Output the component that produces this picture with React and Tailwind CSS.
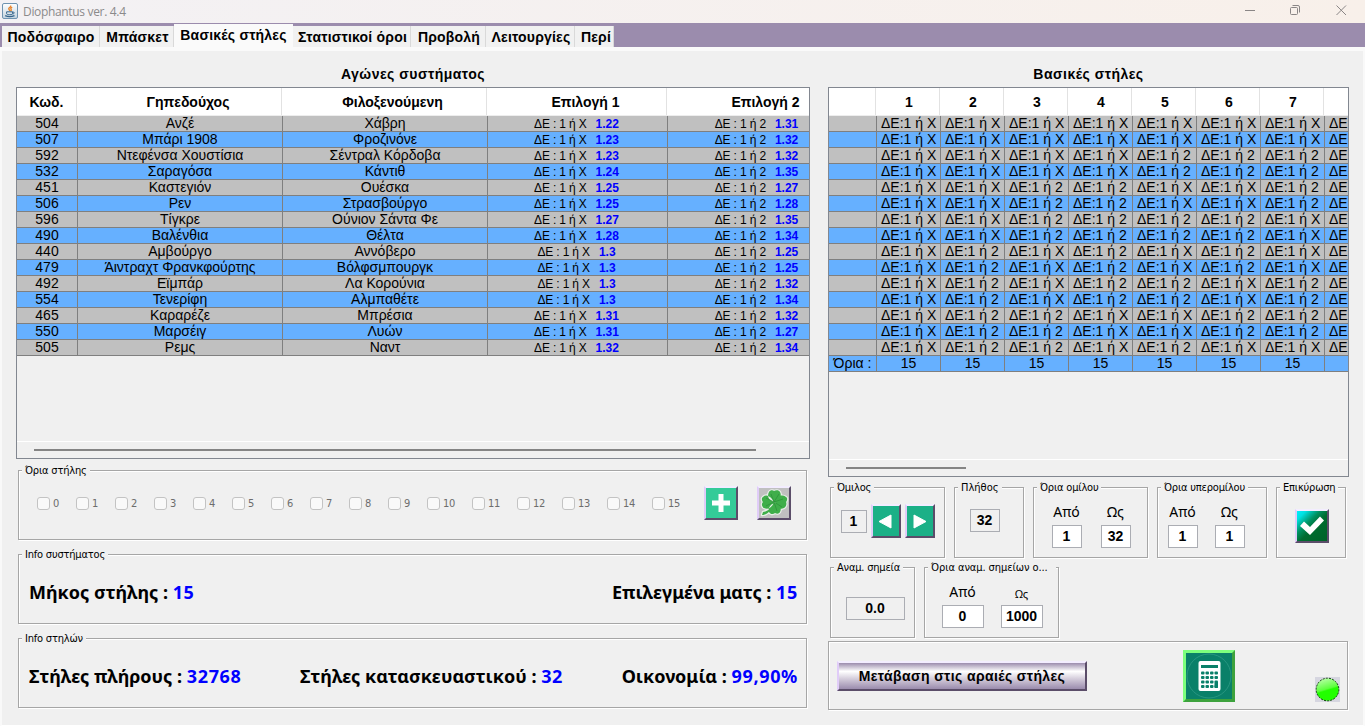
import clsx from 'clsx'

const tabs = [
  { label: 'Ποδόσφαιρο', width: 'w-[98px] pl-px' },
  { label: 'Μπάσκετ', width: 'w-[74px] pl-[2px]' },
  { label: 'Βασικές στήλες', width: 'w-[119px]', active: true },
  { label: 'Στατιστικοί όροι', width: 'w-[118px] pl-[2px]' },
  { label: 'Προβολή', width: 'w-[75px] pl-[2px]' },
  { label: 'Λειτουργίες', width: 'w-[89px] pl-[2px]' },
  { label: 'Περί', width: 'w-[39px] pl-1' },
]

const matches = [
  ['504', 'Ανζέ', 'Χάβρη', '1.22', '1.31'],
  ['507', 'Μπάρι 1908', 'Φροζινόνε', '1.23', '1.32'],
  ['592', 'Ντεφένσα Χουστίσια', 'Σέντραλ Κόρδοβα', '1.23', '1.32'],
  ['532', 'Σαραγόσα', 'Κάντιθ', '1.24', '1.35'],
  ['451', 'Καστεγιόν', 'Ουέσκα', '1.25', '1.27'],
  ['506', 'Ρεν', 'Στρασβούργο', '1.25', '1.28'],
  ['596', 'Τίγκρε', 'Ούνιον Σάντα Φε', '1.27', '1.35'],
  ['490', 'Βαλένθια', 'Θέλτα', '1.28', '1.34'],
  ['440', 'Αμβούργο', 'Αννόβερο', '1.3', '1.25'],
  ['479', 'Άιντραχτ Φρανκφούρτης', 'Βόλφσμπουργκ', '1.3', '1.25'],
  ['492', 'Εϊμπάρ', 'Λα Κορούνια', '1.3', '1.32'],
  ['554', 'Τενερίφη', 'Αλμπαθέτε', '1.3', '1.34'],
  ['465', 'Καραρέζε', 'Μπρέσια', '1.31', '1.32'],
  ['550', 'Μαρσέιγ', 'Λυών', '1.31', '1.27'],
  ['505', 'Ρεμς', 'Ναντ', '1.32', '1.34'],
]

// one string per match, one character per basic column
const columns = [
  'XXXXXXX',
  'XXXXXXX',
  'XXXX222',
  'XXXX222',
  'XX22XX2',
  'XX22XX2',
  'XX2222X',
  'XX2222X',
  'X2X2X2X',
  'X2X2X2X',
  'X2X22X2',
  'X2X22X2',
  'X22XX22',
  'X22XX22',
  'X22X2XX',
]

const columnLimits = [15, 15, 15, 15, 15, 15, 15]

const limits = Array.from({ length: 16 }, (_, i) => i)

const rowColor = (i) => (i % 2 ? 'bg-[#66b0ff]' : 'bg-[#c0c0c0]')

function TitleBar() {
  return (
    <div className="flex h-[23px] shrink-0 items-center bg-gradient-to-r from-[#f3f1f4] to-[#f8f0ea] pl-[2px]">
      <svg width="16" height="16" viewBox="0 0 16 16" className="-mt-px">
        <defs>
          <linearGradient id="java" x1="0" y1="0" x2="0" y2="1">
            <stop offset="0" stopColor="#ffffff" />
            <stop offset="1" stopColor="#c3d3df" />
          </linearGradient>
        </defs>
        <rect x="0.5" y="0.5" width="15" height="15" rx="1.5" fill="url(#java)" stroke="#6f93b0" />
        <path d="M8.600 2.500c1 1.600-3 2.300-1.600 3.900.4.6.8 1 .8 1.600M10.200 4.200C8.600 5 8.400 5.600 9.200 6.500c.4.6 0 1.100-.6 1.500" fill="none" stroke="#e8842c" strokeWidth="1.300" />
        <path d="M4.600 8.800h6v1.700c0 .8-1 1.200-3 1.200s-3-.4-3-1.200zM10.600 9.200h1c1 0 1 1.600-1 1.800" fill="none" stroke="#36658c" strokeWidth="1" />
        <path d="M3.200 12.700c2.400 1.100 6.600 1.100 9.300 0" fill="none" stroke="#36658c" strokeWidth="1.300" />
      </svg>
      <span className="ml-[5px] font-['Open_Sans','Noto_Sans',sans-serif] text-[12px] leading-none tracking-[-0.33px] text-[#8b8a8b]">Diophantus ver. 4.4</span>
      <svg width="110" height="23" viewBox="0 0 110 23" className="mr-[10px] ml-auto" fill="none" stroke="#8a8686" strokeWidth="1">
        <path d="M0 10.5h10" />
        <rect x="45.500" y="7.500" width="7" height="7" rx="1" />
        <path d="M47.500 5.500h5.500a1.500 1.500 0 0 1 1.500 1.500v5.500" />
        <path d="M91.500 5.500l9.500 9.500M101 5.500l-9.500 9.500" />
      </svg>
    </div>
  )
}

function Tabs() {
  return (
    <div className="flex h-[28px] shrink-0 items-start border-b-[4px] border-[#fafafa] bg-[#9b8cad] pl-[2px]">
      {tabs.map((t) => (
        <div
          key={t.label}
          className={clsx(
            t.width,
            'flex shrink-0 items-center justify-center text-[14px] leading-none font-bold tracking-[0.2px] whitespace-nowrap',
            t.active ? 'mt-px h-[26px] bg-[#fafafa] pb-[4px]' : 'mt-[3px] h-[21px] border-r border-[#d9d9d9] bg-[#f1f1f1]',
          )}
        >
          {t.label}
        </div>
      ))}
    </div>
  )
}

function HeaderCell({ className, children }) {
  return (
    <div className={clsx('flex h-[27px] shrink-0 items-center justify-center border-r border-[#e2e2e2] pt-[2px] text-[14px] font-bold', className)}>
      {children}
    </div>
  )
}

function Cell({ className, children }) {
  return (
    <div className={clsx('flex h-4 shrink-0 items-center border-r border-b border-[#7f7f7f] leading-none whitespace-pre', className)}>
      {children}
    </div>
  )
}

function Odds({ pick, value }) {
  return (
    <Cell className="w-[180px] justify-center pt-px pr-[2px] text-[12px]">
      <span className="tracking-[-0.15px]">{`ΔΕ : 1 ή ${pick}`}</span>
      <span className="ml-[9px] font-bold text-[#0000ff]">{value}</span>
    </Cell>
  )
}

function MatchTable() {
  return (
    <div className="flex h-[372px] w-[794px] flex-col overflow-hidden border border-[#828790]">
      <div className="flex h-7 shrink-0 overflow-hidden border-b border-[#ededed] bg-white">
        <HeaderCell className="w-[60px]">Κωδ.</HeaderCell>
        <HeaderCell className="w-[205px] pl-[18px]">Γηπεδούχος</HeaderCell>
        <HeaderCell className="w-[205px] pl-[17px]">Φιλοξενούμενη</HeaderCell>
        <HeaderCell className="w-[180px] pl-[18px]">Επιλογή 1</HeaderCell>
        <HeaderCell className="w-[180px] pl-[18px]">Επιλογή 2</HeaderCell>
      </div>
      {matches.map(([code, home, away, odds1, odds2], i) => (
        <div key={code} className={clsx('flex h-4 w-full shrink-0 overflow-hidden', rowColor(i))}>
          <Cell className="w-[61px] justify-center pb-px text-[14px]">{code}</Cell>
          <Cell className="w-[205px] justify-center pb-px text-[14px]">{home}</Cell>
          <Cell className="w-[205px] justify-center pb-px text-[14px]">{away}</Cell>
          <Odds pick="X" value={odds1} />
          <Odds pick="2" value={odds2} />
        </div>
      ))}
      <div className="mt-auto h-[17px] shrink-0 border-t border-white pt-[7px] pl-[17px]">
        <div className="h-[2px] w-[722px] bg-[#858585]" />
      </div>
    </div>
  )
}

function ColumnTable() {
  return (
    <div className="flex h-[390px] w-[521px] flex-col overflow-hidden border border-[#828790]">
      <div className="flex h-7 shrink-0 overflow-hidden border-b border-[#ededed] bg-white">
        <HeaderCell className="w-[47px]" />
        {columnLimits.map((_, n) => (
          <HeaderCell key={n} className="w-16 pl-[3px]">{n + 1}</HeaderCell>
        ))}
      </div>
      {columns.map((picks, i) => (
        <div key={i} className={clsx('flex h-4 shrink-0 overflow-hidden', rowColor(i))}>
          <Cell className="w-12" />
          {picks.split('').map((p, n) => (
            <Cell key={n} className="w-16 pb-px pl-1 text-[14px]">{`ΔΕ:1 ή ${p}`}</Cell>
          ))}
          <Cell className="w-6 pb-px pl-1 text-[14px]">ΔΕ</Cell>
        </div>
      ))}
      <div className={clsx('flex h-4 shrink-0 overflow-hidden', rowColor(columns.length))}>
        <Cell className="w-12 justify-center pb-px text-[14px]">Όρια :</Cell>
        {columnLimits.map((limit, n) => (
          <Cell key={n} className="w-16 justify-center pb-px text-[14px]">{limit}</Cell>
        ))}
        <Cell className="w-6" />
      </div>
      <div className="mt-auto h-[17px] shrink-0 border-t border-white pt-[7px] pl-[17px]">
        <div className="h-[2px] w-[120px] bg-[#858585]" />
      </div>
    </div>
  )
}

function Group({ title, titleClass, className, children }) {
  return (
    <div className={clsx('flex shrink-0 flex-col border border-[#a6a6a6] shadow-[1px_1px_0_#fff,inset_1px_1px_0_#fff]', className)}>
      {title && (
        <span className={clsx("-mt-2 ml-[3px] block h-[14px] w-max bg-[#f0f0f0] px-[3px] font-['DejaVu_Sans_Condensed','DejaVu_Sans',sans-serif] text-[11px] leading-[16px]", titleClass || 'tracking-[-0.2px]')}>
          {title}
        </span>
      )}
      {children}
    </div>
  )
}

function Stat({ label, value }) {
  return (
    <span className="font-['Noto_Sans',sans-serif] text-[18px] leading-none font-bold whitespace-nowrap">
      {label} : <span className="tracking-[0.65px] text-[#0000ff]">{value}</span>
    </span>
  )
}

function Field({ value, className }) {
  return (
    <div className={clsx('flex h-[23px] shrink-0 items-center justify-center border border-[#abadb3] pr-px pb-px text-[14px] leading-none font-bold', className)}>
      {value}
    </div>
  )
}

function Range({ label, value, className, small }) {
  return (
    <div className="flex flex-col items-center">
      <span className={clsx("flex h-[24px] items-center pr-px font-['Noto_Sans',sans-serif] leading-none", small ? 'pt-px text-[11px]' : 'pb-[2px] text-[14px]')}>{label}</span>
      <Field value={value} className={clsx('bg-white', className)} />
    </div>
  )
}

function IconButton({ className, children }) {
  return (
    <button className={clsx('flex shrink-0 items-center justify-center border-2 border-t-[#f3edff] border-r-[#5b4d69] border-b-[#5b4d69] border-l-[#e0ccf8]', className)}>
      {children}
    </button>
  )
}

function Clover() {
  const leaves = 'M15 14C9 12 8 8 10 4c1-2 4-2 5-1 2-1 5-1 6 1 2 4 0 8-6 10zM16 14c2-6 7-8 11-5 2 1 1 4 0 5 1 2 0 5-2 6-4 2-7 0-9-6zM15 15c6 1 8 5 6 9-1 2-3 2-5 1-2 2-5 1-6-1-1-4 1-7 5-9zM15 14C12 8 7 6 4 9c-2 1-1 4 0 5-2 2-1 5 1 6 4 2 8 0 10-6z'
  return (
    <svg width="30" height="30" viewBox="0 0 30 30">
      <g fill="#3fae4a" stroke="#e8efe8" strokeWidth="2.400" strokeLinejoin="round">
        <path d={leaves} />
        <path d="M14 16c-2 5-5 7-10 8l-1 3c5 0 9-4 11-11z" />
      </g>
      <path d={leaves} fill="#3fae4a" />
      <path d="M14 16c-2 5-5 7-10 8l-1 3c5 0 9-4 11-11z" fill="#3fae4a" />
      <path d="M15 14L12 6M15 14l5-8M15 14l9-3M15 14l8 5M15 14l3 9M15 14l-8-4M15 14l-8 4" fill="none" stroke="#2b8f38" strokeWidth="0.700" />
    </svg>
  )
}

function Calculator() {
  return (
    <svg width="46" height="46" viewBox="0 0 46 46">
      <circle cx="23" cy="23" r="22" fill="none" stroke="#2f9a85" strokeWidth="0.800" />
      <rect x="12.500" y="8" width="22" height="30" rx="2" fill="#fff" />
      <rect x="15" y="12" width="17" height="3" fill="#0a8069" />
      {[18.5, 23, 27.5, 32].map((y, r) =>
        [15, 19.5, 24, 28.5].map((x, c) => (
          <rect key={`${r}${c}`} x={x} y={y} width="3.500" height={r === 2 && c === 3 ? 7.5 : 3} rx="1" fill="#0a8069" />
        )),
      )}
    </svg>
  )
}

function Led() {
  return (
    <svg width="25" height="25" viewBox="0 0 25 25" className="bg-[#d6d6e0]">
      <defs>
        <linearGradient id="led" x1="0.300" y1="0" x2="0.600" y2="1">
          <stop offset="0" stopColor="#b9ffa8" />
          <stop offset="0.480" stopColor="#5cff3c" />
          <stop offset="0.550" stopColor="#22ff00" />
          <stop offset="1" stopColor="#22ff00" />
        </linearGradient>
      </defs>
      <circle cx="12.500" cy="12.500" r="11.300" fill="url(#led)" stroke="#123a10" strokeWidth="1" strokeDasharray="2 1.200" />
    </svg>
  )
}

function LeftPane() {
  return (
    <div className="flex w-[794px] shrink-0 flex-col">
      <h2 className="h-[36px] pt-[15px] text-center text-[14px] leading-[17px] font-bold tracking-[0.48px]">Αγώνες συστήματος</h2>
      <MatchTable />
      <Group title="Όρια στήλης" className="mt-[11px] ml-[2px] h-[70px] w-[789px]">
        <div className="flex items-center pt-[9px] pl-[18px]">
          {limits.map((n) => (
            <label key={n} className={clsx('flex shrink-0 items-center', n < 10 ? 'w-[39px]' : 'w-[45px]')}>
              <span className="h-[13px] w-[13px] rounded-[3px] border border-[#c3c3c3] bg-[#f9f9f9]" />
              <span className="ml-[3px] font-['DejaVu_Sans_Condensed','DejaVu_Sans',sans-serif] text-[11px] leading-none tracking-[-0.2px] text-[#6d6d6d]">{n}</span>
            </label>
          ))}
          <IconButton className="ml-[7px] h-[34px] w-[34px] bg-[#34cb98]">
            <svg width="18" height="18" viewBox="0 0 18 18">
              <path d="M6.500 0h5v6.500H18v5h-6.500V18h-5v-6.500H0v-5h6.500z" fill="#fff" />
            </svg>
          </IconButton>
          <IconButton className="ml-[19px] h-[34px] w-[34px] bg-[#c0c0c0]">
            <Clover />
          </IconButton>
        </div>
      </Group>
      <Group title="Info συστήματος" className="mt-[14px] ml-[2px] h-[70px] w-[789px]">
        <div className="flex justify-between pt-[22px] pr-[8px] pl-[10px]">
          <Stat label="Μήκος στήλης" value="15" />
          <Stat label="Επιλεγμένα ματς" value="15" />
        </div>
      </Group>
      <Group title="Info στηλών" className="mt-[14px] ml-[2px] h-[70px] w-[789px]">
        <div className="flex justify-between pt-[22px] pr-[8px] pl-[10px]">
          <Stat label="Στήλες πλήρους" value="32768" />
          <Stat label="Στήλες κατασκευαστικού" value="32" />
          <Stat label="Οικονομία" value="99,90%" />
        </div>
      </Group>
    </div>
  )
}

function RightPane() {
  return (
    <div className="flex w-[521px] shrink-0 flex-col">
      <h2 className="h-[36px] pt-[15px] text-center text-[14px] leading-[17px] font-bold tracking-[0.48px]">Βασικές στήλες</h2>
      <ColumnTable />
      <div className="mt-[10px] ml-[2px] flex">
        <Group title="Όμιλος" className="h-[71px] w-[115px]">
          <div className="flex items-center pt-[10px] pl-[10px]">
            <Field value="1" className="w-[26px]" />
            <IconButton className="ml-1 h-[34px] w-[30px] bg-[#1bb087] pr-[2px]">
              <svg width="14" height="15" viewBox="0 0 14 15"><path d="M13 1v13L1 7.500z" fill="#fff" stroke="#fff" strokeLinejoin="round" /></svg>
            </IconButton>
            <IconButton className="ml-1 h-[34px] w-[30px] bg-[#1bb087]">
              <svg width="14" height="15" viewBox="0 0 14 15"><path d="M1 1v13l12-6.500z" fill="#fff" stroke="#fff" strokeLinejoin="round" /></svg>
            </IconButton>
          </div>
        </Group>
        <Group title="Πλήθος" titleClass="tracking-normal" className="ml-[9px] h-[71px] w-[70px]">
          <Field value="32" className="mt-[15px] ml-[15px] w-[30px]" />
        </Group>
        <Group title="Όρια ομίλου" className="ml-[9px] h-[71px] w-[115px]">
          <div className="flex gap-[19px] pt-[7px] pl-[18px]">
            <Range label="Από" value="1" className="w-[30px]" />
            <Range label="Ως" value="32" className="w-[30px]" />
          </div>
        </Group>
        <Group title="Όρια υπερομίλου" className="ml-[9px] h-[71px] w-[110px]">
          <div className="flex gap-[17px] pt-[7px] pl-[10px]">
            <Range label="Από" value="1" className="w-[30px]" />
            <Range label="Ως" value="1" className="w-[30px]" />
          </div>
        </Group>
        <Group title="Επικύρωση" className="ml-[9px] h-[71px] w-[70px]">
          <IconButton className="mt-[15px] ml-[18px] h-[34px] w-[34px] bg-[linear-gradient(135deg,#00f0ff_0%,#00e0e0_15%,#009060_38%,#006c30_55%,#006228_100%)]">
            <svg width="26" height="22" viewBox="0 0 26 22"><path d="M1 11l4-4.500 6 5.500L21 1.500 25 5.500 11 20z" fill="#fff" /></svg>
          </IconButton>
        </Group>
      </div>
      <div className="mt-[9px] ml-[2px] flex">
        <Group title="Αναμ. σημεία" className="h-[71px] w-[85px]">
          <Field value="0.0" className="mt-[23px] ml-[15px] w-[59px]" />
        </Group>
        <Group title="Όρια αναμ. σημείων ο..." titleClass="tracking-[-0.08px] pr-[8px]" className="ml-[9px] h-[71px] w-[135px]">
          <div className="flex gap-[17px] pt-[7px] pl-[17px]">
            <Range label="Από" value="0" className="w-[42px]" />
            <Range label="Ως" value="1000" className="w-[42px]" small />
          </div>
        </Group>
      </div>
      <Group className="mt-[3px] h-[69px] w-[520px]">
        <div className="flex">
          <button className="mt-[19px] ml-[8px] h-[30px] w-[250px] border-2 border-t-[#f3edff] border-r-[#5b4d69] border-b-[#5b4d69] border-l-[#e0ccf8] bg-[linear-gradient(#9b8cad_0%,#ffffff_32%,#c9c0d2_68%,#9b8cad_100%)] text-[14px] leading-none font-bold tracking-[0.38px]">
            Μετάβαση στις αραιές στήλες
          </button>
          <button className="mt-2 ml-[96px] flex h-[52px] w-[52px] items-center justify-center border-[3px] border-t-[#7dff7d] border-r-[#3da23d] border-b-[#3da23d] border-l-[#7dff7d] bg-[#0a8069]">
            <Calculator />
          </button>
          <div className="mt-[35px] ml-[80px]">
            <Led />
          </div>
        </div>
      </Group>
    </div>
  )
}

export default function App() {
  return (
    <div className="flex h-[726px] w-[1365px] flex-col overflow-hidden bg-[#f0f0f0] font-['Liberation_Sans',Arial,sans-serif] text-black">
      <TitleBar />
      <Tabs />
      <div className="flex grow gap-[18px] border-x-2 border-b border-x-[#f9f9f9] border-b-white pl-[14px]">
        <LeftPane />
        <RightPane />
      </div>
    </div>
  )
}
